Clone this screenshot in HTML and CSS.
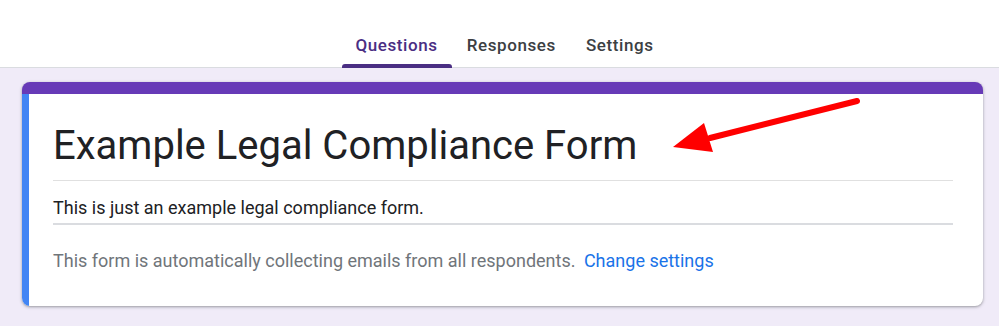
FILE: index.html
```html
<!DOCTYPE html>
<html lang="en">
<head>
<meta charset="UTF-8" />
<title>Example Legal Compliance Form</title>
<link rel="stylesheet" href="styles.css">
</head>
<body>

<div class="topbar">
  <nav class="tabs">
    <a class="tab active">Questions</a>
    <a class="tab">Responses</a>
    <a class="tab">Settings</a>
  </nav>
</div>

<div class="page">
  <div class="card">
    <div class="card-body">
      <h1 class="title">Example Legal Compliance Form</h1>
      <div class="desc">This is just an example legal compliance form.</div>
      <p class="note">This form is automatically collecting emails from all respondents. <a class="link">Change settings</a></p>
    </div>
  </div>

  <!-- annotation arrow -->
  <svg class="arrow" width="200" height="60" viewBox="0 0 200 60">
    <line x1="185" y1="5" x2="38" y2="42" stroke="#ff0000" stroke-width="6" stroke-linecap="round" />
    <polygon points="1,51 32,27 41,56" fill="#ff0000" />
  </svg>
</div>

</body>
</html>
```

FILE: styles.css
```css
body {
  margin: 0;
  font-family: Roboto, Arial, sans-serif;
  background: #f0ebf8;
}
.topbar {
  background: white;
  height: 68px;
  border-bottom: 1px solid #dadce0;
  box-sizing: border-box;
  display: flex;
  justify-content: center;
}
.tabs {
  display: flex;
  align-items: flex-end;
  margin-left: 12px;
}
.tab {
  font-size: 17px;
  font-weight: 500;
  color: #3c4043;
  padding: 0 15px 0 15px;
  height: 67px;
  line-height: 90px;
  box-sizing: border-box;
  letter-spacing: 0.6px;
  position: relative;
}
.tab.active {
  color: #4a2e83;
  padding: 0 14px 0 13px;
}
.tab.active::after {
  content: "";
  position: absolute;
  left: 0;
  right: 0;
  bottom: -1px;
  height: 4px;
  background: #4a2e83;
  border-radius: 3px 3px 0 0;
}
.page {
  position: relative;
  padding: 14px 16px 20px 22px;
}
.card {
  width: 961px;
  background: white;
  border-radius: 8px;
  border-top: 12px solid #673ab7;
  box-shadow: 0 1px 2px rgba(60,64,67,0.3), 0 1px 3px 1px rgba(60,64,67,0.15);
  overflow: hidden;
}
.card-body {
  border-left: 7px solid #4285f4;
  padding: 27px 30px 34px 24px;
}
.title {
  font-size: 40px;
  font-weight: 400;
  color: #202124;
  margin: 0;
  line-height: 50px;
  padding-bottom: 9px;
  border-bottom: 1px solid #e0e0e0;
}
.desc {
  font-size: 18px;
  color: #202124;
  padding: 16px 0 4px 0;
  line-height: 22px;
  border-bottom: 2px solid #dadce0;
}
.note {
  font-size: 18px;
  color: #70757a;
  margin: 25px 0 0 0;
  line-height: 22px;
}
.link {
  color: #1a73e8;
  margin-left: 4px;
}
.arrow {
  position: absolute;
  left: 672px;
  top: 28px;
}
```
